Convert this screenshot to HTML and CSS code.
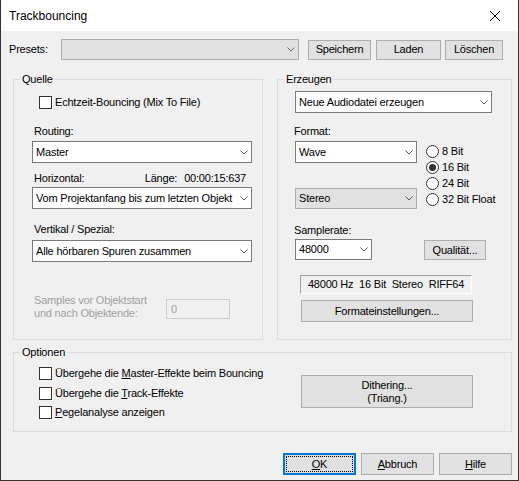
FILE: index.html
```html
<!DOCTYPE html>
<html lang="de">
<head>
<meta charset="utf-8">
<title>Trackbouncing</title>
<link rel="stylesheet" href="styles.css">
</head>
<body>
<div class="window">
  <div class="titlebar">
    <span class="title">Trackbouncing</span>
    <span class="close"><svg width="10" height="10" viewBox="0 0 10 10"><path d="M0 0L10 10M10 0L0 10" stroke="#000" stroke-width="1" fill="none"/></svg></span>
  </div>

  <div class="presets">
    <span class="presets-lbl">Presets:</span>
    <div class="combo droplist presets-combo"><span class="combo-text"></span><span class="arrow"><svg width="8" height="5" viewBox="0 0 8 5"><path d="M0.5 0.5L4 4L7.5 0.5" fill="none" stroke="#707070"/></svg></span></div>
    <button class="btn btn-save">Speichern</button>
    <button class="btn btn-load">Laden</button>
    <button class="btn btn-del">Löschen</button>
  </div>

  <div class="groups">
    <div class="group quelle">
      <span class="legend">Quelle</span>
      <div class="check-row first-check"><span class="checkbox"></span><span class="check-lbl">Echtzeit-Bouncing (Mix To File)</span></div>
      <div class="q-lbl lbl-routing">Routing:</div>
      <div class="combo q-combo combo-master"><span class="combo-text">Master</span><span class="arrow"><svg width="8" height="5" viewBox="0 0 8 5"><path d="M0.5 0.5L4 4L7.5 0.5" fill="none" stroke="#555"/></svg></span></div>
      <div class="hrow"><span>Horizontal:</span><span class="laenge"><span>Länge:</span><span class="time">00:00:15:637</span></span></div>
      <div class="combo q-combo combo-vom"><span class="combo-text">Vom Projektanfang bis zum letzten Objekt</span><span class="arrow"><svg width="8" height="5" viewBox="0 0 8 5"><path d="M0.5 0.5L4 4L7.5 0.5" fill="none" stroke="#555"/></svg></span></div>
      <div class="q-lbl lbl-vertikal">Vertikal / Spezial:</div>
      <div class="combo q-combo combo-alle"><span class="combo-text">Alle hörbaren Spuren zusammen</span><span class="arrow"><svg width="8" height="5" viewBox="0 0 8 5"><path d="M0.5 0.5L4 4L7.5 0.5" fill="none" stroke="#555"/></svg></span></div>
      <div class="samples">
        <div class="samples-text">Samples vor Objektstart<br>und nach Objektende:</div>
        <div class="input-disabled">0</div>
      </div>
    </div>

    <div class="group erzeugen">
      <span class="legend">Erzeugen</span>
      <div class="combo e-combo combo-neue"><span class="combo-text">Neue Audiodatei erzeugen</span><span class="arrow"><svg width="8" height="5" viewBox="0 0 8 5"><path d="M0.5 0.5L4 4L7.5 0.5" fill="none" stroke="#555"/></svg></span></div>
      <div class="e-lbl lbl-format">Format:</div>
      <div class="fmt-row">
        <div class="fmt-left">
          <div class="combo combo-wave"><span class="combo-text">Wave</span><span class="arrow"><svg width="8" height="5" viewBox="0 0 8 5"><path d="M0.5 0.5L4 4L7.5 0.5" fill="none" stroke="#555"/></svg></span></div>
          <div class="combo droplist combo-stereo"><span class="combo-text">Stereo</span><span class="arrow"><svg width="8" height="5" viewBox="0 0 8 5"><path d="M0.5 0.5L4 4L7.5 0.5" fill="none" stroke="#555"/></svg></span></div>
        </div>
        <div class="radios">
          <div class="radio-row"><span class="radio"></span><span class="radio-lbl">8 Bit</span></div>
          <div class="radio-row"><span class="radio checked"><span class="dot"></span></span><span class="radio-lbl">16 Bit</span></div>
          <div class="radio-row"><span class="radio"></span><span class="radio-lbl">24 Bit</span></div>
          <div class="radio-row"><span class="radio"></span><span class="radio-lbl">32 Bit Float</span></div>
        </div>
      </div>
      <div class="e-lbl lbl-samplerate">Samplerate:</div>
      <div class="sr-row">
        <div class="combo combo-sr"><span class="combo-text">48000</span><span class="arrow"><svg width="8" height="5" viewBox="0 0 8 5"><path d="M0.5 0.5L4 4L7.5 0.5" fill="none" stroke="#555"/></svg></span></div>
        <button class="btn btn-quali">Qualität...</button>
      </div>
      <div class="info">48000 Hz  16 Bit  Stereo  RIFF64</div>
      <button class="btn btn-formate">Formateinstellungen...</button>
    </div>
  </div>

  <div class="group optionen">
    <span class="legend">Optionen</span>
    <div class="opt-row">
      <div class="opt-checks">
        <div class="check-row opt-check"><span class="checkbox"></span><span class="check-lbl">Übergehe die <u>M</u>aster-Effekte beim Bouncing</span></div>
        <div class="check-row opt-check"><span class="checkbox"></span><span class="check-lbl">Übergehe die <u>T</u>rack-Effekte</span></div>
        <div class="check-row opt-check"><span class="checkbox"></span><span class="check-lbl"><u>P</u>egelanalyse anzeigen</span></div>
      </div>
      <button class="btn btn-dither">Dithering...<br>(Triang.)</button>
    </div>
  </div>

  <div class="footer">
    <button class="btn btn-foot btn-ok"><span class="focus"><u>O</u>K</span></button>
    <button class="btn btn-foot"><u>A</u>bbruch</button>
    <button class="btn btn-foot"><u>H</u>ilfe</button>
  </div>
</div>
</body>
</html>
```

FILE: styles.css
```css
* { box-sizing: border-box; }

html, body {
  margin: 0;
  padding: 0;
}

body {
  background: #f0f0f0;
  font-family: "Liberation Sans", Arial, sans-serif;
  font-size: 11px;
  letter-spacing: -0.2px;
  color: #000;
}

.window {
  width: 519px;
  height: 481px;
  border: 1px solid #333;
  border-top: none;
  background: #f0f0f0;
  display: flex;
  flex-direction: column;
  overflow: hidden;
}

/* title bar */
.titlebar {
  flex: none;
  height: 31px;
  background: #fff;
  display: flex;
  align-items: center;
  justify-content: space-between;
  padding-left: 8px;
}

.title {
  font-size: 12px;
  letter-spacing: 0;
  line-height: 14px;
}

.close {
  width: 46px;
  height: 31px;
  display: flex;
  align-items: center;
  justify-content: center;
}

/* generic controls */
.combo {
  display: flex;
  align-items: center;
  background: #fff;
  border: 1px solid #7a7a7a;
  height: 22px;
}

.combo.droplist {
  background: #e1e1e1;
  border-color: #adadad;
}

.combo-text {
  flex: 1;
  padding-left: 3px;
  white-space: nowrap;
  overflow: hidden;
  line-height: 13px;
}

.arrow {
  flex: none;
  width: 15px;
  height: 100%;
  display: flex;
  align-items: center;
  justify-content: center;
}

.btn {
  font: inherit;
  letter-spacing: inherit;
  color: #000;
  background: #e1e1e1;
  border: 1px solid #adadad;
  padding: 0;
  margin: 0;
  line-height: 13px;
  text-align: center;
  white-space: nowrap;
}

.checkbox {
  flex: none;
  width: 13px;
  height: 13px;
  border: 1px solid #333;
  background: #fff;
}

.check-row {
  display: flex;
  align-items: center;
}

.check-lbl {
  margin-left: 3px;
  line-height: 13px;
  white-space: nowrap;
}

/* presets row */
.presets {
  flex: none;
  display: flex;
  align-items: center;
  height: 21px;
  margin: 8px 0 0 8px;
}

.presets-lbl {
  width: 52px;
  line-height: 13px;
}

.presets-combo {
  width: 238px;
  height: 21px;
  background: #e4e4e4;
  border-color: #c6c6c6;
}

.btn-save { margin-left: 9px; width: 63px; height: 20px; }
.btn-load { margin-left: 5px; width: 65px; height: 20px; }
.btn-del  { margin-left: 4px; width: 58px; height: 20px; }

/* group boxes */
.groups {
  flex: none;
  display: flex;
  gap: 14px;
  margin: 19px 0 0 12px;
}

.group {
  border: 1px solid #dcdcdc;
  display: flex;
  flex-direction: column;
  align-items: flex-start;
}

.legend {
  margin: -7px 0 0 6px;
  padding: 0 2px;
  height: 13px;
  line-height: 13px;
  background: #f0f0f0;
}

.quelle { width: 250px; height: 261px; }
.erzeugen { width: 235px; height: 261px; }

/* Quelle */
.first-check {
  margin: 10px 0 0 25px;
  height: 13px;
}

.q-lbl {
  margin-left: 20px;
  line-height: 13px;
}

.lbl-routing { margin-top: 16px; }
.lbl-vertikal { margin-top: 14px; }

.q-combo {
  margin-left: 18px;
  width: 220px;
}

.combo-master { margin-top: 3px; }
.combo-vom { margin-top: 2px; }
.combo-alle { margin-top: 4px; }

.hrow {
  margin: 9px 0 0 20px;
  width: 212px;
  display: flex;
  justify-content: space-between;
  line-height: 13px;
}

.time { margin-left: 7px; }

.samples {
  margin: 32px 0 0 20px;
  display: flex;
  align-items: flex-start;
}

.samples-text {
  width: 132px;
  line-height: 13px;
  color: #a0a0a0;
}

.input-disabled {
  margin-top: 5px;
  width: 64px;
  height: 20px;
  border: 1px solid #cccccc;
  background: #f0f0f0;
  color: #a0a0a0;
  padding-left: 4px;
  line-height: 18px;
}

/* Erzeugen */
.e-combo {
  margin: 5px 0 0 17px;
  width: 197px;
}

.e-lbl {
  margin-left: 16px;
  line-height: 13px;
}

.lbl-format { margin-top: 12px; }
.lbl-samplerate { margin-top: 15px; }

.fmt-row {
  margin-top: 3px;
  display: flex;
  align-items: flex-start;
}

.fmt-left {
  margin-left: 17px;
  width: 122px;
  display: flex;
  flex-direction: column;
}

.combo-wave { height: 22px; }
.combo-stereo { margin-top: 25px; height: 21px; }

.radios {
  margin: 2px 0 0 9px;
  display: flex;
  flex-direction: column;
}

.radio-row {
  height: 16px;
  display: flex;
  align-items: center;
}

.radio {
  flex: none;
  width: 13px;
  height: 13px;
  border: 1px solid #333;
  border-radius: 50%;
  background: #fff;
  display: flex;
  align-items: center;
  justify-content: center;
}

.dot {
  width: 7px;
  height: 7px;
  border-radius: 50%;
  background: #333;
}

.radio-lbl {
  margin-left: 3px;
  line-height: 13px;
  white-space: nowrap;
}

.sr-row {
  margin-top: 2px;
  display: flex;
  align-items: flex-start;
}

.combo-sr {
  margin-left: 17px;
  width: 77px;
  height: 21px;
}

.btn-quali {
  margin: 1px 0 0 52px;
  width: 62px;
  height: 20px;
}

.info {
  margin: 15px 0 0 22px;
  width: 172px;
  height: 19px;
  border-top: 1px solid #a0a0a0;
  border-left: 1px solid #a0a0a0;
  border-right: 1px solid #fff;
  border-bottom: 1px solid #fff;
  background: #f0f0f0;
  text-align: center;
  line-height: 17px;
  white-space: pre;
}

.btn-formate {
  margin: 6px 0 0 23px;
  width: 172px;
  height: 22px;
}

/* Optionen */
.optionen {
  flex: none;
  margin: 12px 0 0 12px;
  width: 499px;
  height: 80px;
}

.opt-row {
  margin-top: 5px;
  display: flex;
  align-items: flex-start;
}

.opt-checks {
  width: 287px;
  padding-left: 25px;
  display: flex;
  flex-direction: column;
}

.opt-check { height: 19.5px; }

.btn-dither {
  margin-top: 11px;
  width: 172px;
  height: 33px;
}

/* footer */
.footer {
  flex: none;
  display: flex;
  justify-content: flex-end;
  gap: 5px;
  margin: 21px 6px 0 0;
}

.btn-foot {
  width: 73px;
  height: 22px;
}

.btn-ok {
  border-color: #0078d7;
  box-shadow: inset 0 0 0 1px #0078d7;
  padding: 2px;
}

.focus {
  display: flex;
  align-items: center;
  justify-content: center;
  width: 100%;
  height: 100%;
  outline: 1px dotted #000;
  outline-offset: -1px;
}
```
